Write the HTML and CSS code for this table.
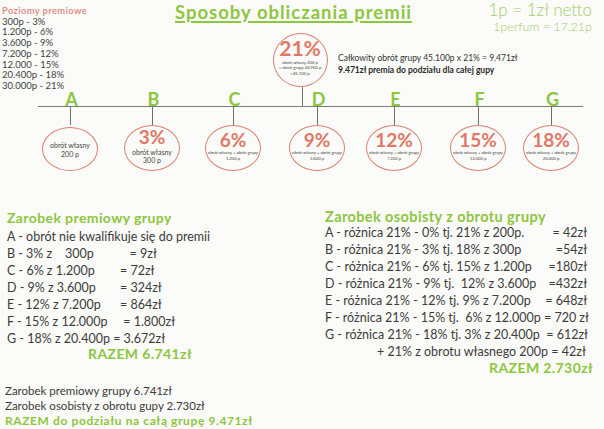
FILE: index.html
```html
<!DOCTYPE html>
<html lang="pl">
<head>
<meta charset="utf-8">
<title>Sposoby obliczania premii</title>
<link rel="stylesheet" href="styles.css">
</head>
<body>
<div class="page">
  <section class="top">
    <header class="header">
      <div class="levels">
        <div class="levels-title">Poziomy premiowe</div>
        <div>300p - 3%</div>
        <div>1.200p - 6%</div>
        <div>3.600p - 9%</div>
        <div>7.200p - 12%</div>
        <div>12.000 - 15%</div>
        <div>20.400p - 18%</div>
        <div>30.000p - 21%</div>
      </div>
      <h1 class="title">Sposoby obliczania premii</h1>
      <div class="rates">
        <div class="rate-main">1p = 1zł netto</div>
        <div class="rate-sub">1perfum = 17,21p</div>
      </div>
    </header>

    <div class="peak">
      <div class="circle circle-peak">
        <span class="pct pct-lg">21%</span>
        <span class="tiny">obrót własny 200 p<br>+ obrót grupy 44.900 p<br>=45.100 p</span>
      </div>
      <div class="stem stem-peak"></div>
    </div>
    <div class="total">
      <p>Całkowity obrót grupy 45.100p x 21% = 9.471zł</p>
      <p class="total-bold">9.471zł premia do podziału dla całej gupy</p>
    </div>

    <div class="timeline"></div>

    <div class="node node-a">
      <span class="letter">A</span>
      <span class="stem"></span>
      <div class="circle circle-sm">
        <span class="small">obrót własny<br>200 p</span>
      </div>
    </div>
    <div class="node node-b">
      <span class="letter">B</span>
      <span class="stem"></span>
      <div class="circle">
        <span class="pct">3%</span>
        <span class="small small-b">obrót własny<br>300 p</span>
      </div>
    </div>
    <div class="node node-c">
      <span class="letter">C</span>
      <span class="stem"></span>
      <div class="circle">
        <span class="pct">6%</span>
        <span class="tiny">obrót własny + obrót grupy<br>1.200 p</span>
      </div>
    </div>
    <div class="node node-d">
      <span class="letter">D</span>
      <span class="stem"></span>
      <div class="circle">
        <span class="pct">9%</span>
        <span class="tiny">obrót własny + obrót grupy<br>3.600 p</span>
      </div>
    </div>
    <div class="node node-e">
      <span class="letter">E</span>
      <span class="stem"></span>
      <div class="circle">
        <span class="pct">12%</span>
        <span class="tiny">obrót własny + obrót grupy<br>7.200 p</span>
      </div>
    </div>
    <div class="node node-f">
      <span class="letter">F</span>
      <span class="stem"></span>
      <div class="circle">
        <span class="pct">15%</span>
        <span class="tiny">obrót własny + obrót grupy<br>12.000 p</span>
      </div>
    </div>
    <div class="node node-g">
      <span class="letter">G</span>
      <span class="stem"></span>
      <div class="circle">
        <span class="pct">18%</span>
        <span class="tiny">obrót własny + obrót grupy<br>20.400 p</span>
      </div>
    </div>
  </section>

  <section class="earnings">
    <div class="col col-left">
      <h2 class="heading">Zarobek premiowy grupy</h2>
      <div class="row">A - obrót nie kwalifikuje się do premii</div>
      <div class="row"><span class="lhs">B - 3% z    300p</span><span class="rhs">   = 9zł</span></div>
      <div class="row"><span class="lhs">C - 6% z 1.200p</span><span class="rhs">= 72zł</span></div>
      <div class="row"><span class="lhs">D - 9% z 3.600p</span><span class="rhs">= 324zł</span></div>
      <div class="row"><span class="lhs">E - 12% z 7.200p</span><span class="rhs">= 864zł</span></div>
      <div class="row"><span class="lhs">F - 15% z 12.000p</span><span class="rhs"> = 1.800zł</span></div>
      <div class="row">G - 18% z 20.400p = 3.672zł</div>
      <div class="sum sum-left">RAZEM 6.741zł</div>
    </div>
    <div class="col col-right">
      <h2 class="heading heading-right">Zarobek osobisty z obrotu grupy</h2>
      <div class="row row-r"><span>A - różnica 21% - 0% tj. 21% z 200p.</span><span class="rhs-r">= 42zł</span></div>
      <div class="row row-r"><span>B - różnica 21% - 3% tj. 18% z 300p</span><span class="rhs-r">=54zł</span></div>
      <div class="row row-r"><span>C - różnica 21% - 6% tj. 15% z 1.200p</span><span class="rhs-r">=180zł</span></div>
      <div class="row row-r"><span>D - różnica 21% - 9% tj.  12% z 3.600p</span><span class="rhs-r">=432zł</span></div>
      <div class="row row-r"><span>E - różnica 21% - 12% tj. 9% z 7.200p</span><span class="rhs-r">= 648zł</span></div>
      <div class="row row-r"><span>F - różnica 21% - 15% tj.  6% z 12.000p</span><span class="rhs-r"> = 720 zł</span></div>
      <div class="row row-r"><span>G - różnica 21% - 18% tj. 3% z 20.400p</span><span class="rhs-r">  = 612zł</span></div>
      <div class="row row-own">+ 21% z obrotu własnego 200p = 42zł</div>
      <div class="sum sum-right">RAZEM 2.730zł</div>
    </div>
  </section>

  <section class="summary">
    <p>Zarobek premiowy grupy 6.741zł</p>
    <p>Zarobek osobisty z obrotu gupy 2.730zł</p>
    <p class="summary-total">RAZEM do podziału na całą grupę 9.471zł</p>
  </section>
</div>
</body>
</html>
```

FILE: styles.css
```css
* {
  box-sizing: border-box;
}

html, body {
  margin: 0;
  padding: 0;
}

body {
  width: 604px;
  height: 429px;
  overflow: hidden;
  background: #fbfbf9;
  font-family: "Lato", "Open Sans", sans-serif;
  color: #3b3b3b;
}

p, h1, h2 {
  margin: 0;
  font-weight: inherit;
}

.page {
  display: flex;
  flex-direction: column;
  width: 604px;
  height: 429px;
}

/* ---------- top diagram area ---------- */
.top {
  position: relative;
  height: 209px;
  flex: none;
}

.header {
  display: flex;
  align-items: flex-start;
}

.levels {
  width: 172px;
  padding: 5px 0 0 2px;
  font-size: 9.5px;
  line-height: 10.8px;
  color: #3f3f3f;
}

.levels-title {
  font-weight: 700;
  font-size: 9.3px;
  letter-spacing: 0.4px;
  color: #de8f8a;
  line-height: 11px;
  margin-bottom: 0.5px;
}

.title {
  margin: 2px 0 0 3px;
  font-size: 18.5px;
  line-height: 21px;
  font-weight: 700;
  color: #8dc63f;
  letter-spacing: 1px;
  text-decoration: underline;
  text-decoration-thickness: 1.5px;
  text-underline-offset: 2px;
}

.rates {
  margin-left: auto;
  padding: 0 12px 0 0;
  color: #a3cf6b;
  font-weight: 300;
  text-align: right;
}

.rate-main {
  font-size: 17px;
  line-height: 20px;
}

.rate-sub {
  font-size: 12.5px;
  line-height: 14px;
}

/* circles */
.circle {
  width: 56px;
  height: 46px;
  border: 1.5px solid #d9806f;
  border-radius: 50%;
  display: flex;
  flex-direction: column;
  align-items: center;
  justify-content: center;
  text-align: center;
  white-space: nowrap;
  flex: none;
}

.circle-sm {
  height: 44px;
  margin-top: 2px;
}

.pct {
  font-size: 19px;
  line-height: 16px;
  font-weight: 700;
  color: #e17866;
  margin-top: -3px;
}

.pct-lg {
  font-size: 21px;
  line-height: 20px;
  margin-top: -6px;
}

.small {
  font-size: 7px;
  line-height: 9px;
  color: #444;
  margin-top: 1px;
}

.small-b {
  margin-top: 3px;
  line-height: 8.5px;
}

.tiny {
  font-size: 4.2px;
  line-height: 5.6px;
  color: #444;
  margin-top: 2px;
}

.stem {
  display: block;
  width: 1px;
  height: 19px;
  background: #6f6f6f;
  flex: none;
}

/* 21% peak node */
.peak {
  position: absolute;
  left: 272px;
  top: 33px;
  display: flex;
  flex-direction: column;
  align-items: center;
  width: 56px;
}

.circle-peak {
  width: 55px;
  height: 54px;
}

.stem-peak {
  margin-left: 5px;
  height: 20px;
}

.total {
  position: absolute;
  left: 338px;
  top: 52px;
  font-size: 8.5px;
  line-height: 12px;
  color: #333;
}

.total-bold {
  font-weight: 700;
  color: #2a2a2a;
}

.timeline {
  position: absolute;
  left: 38px;
  top: 105.5px;
  width: 545px;
  height: 1.5px;
  background: #7b7b7b;
}

.node {
  position: absolute;
  top: 91px;
  width: 56px;
  display: flex;
  flex-direction: column;
  align-items: center;
}

.letter {
  display: block;
  height: 15px;
  font-size: 18px;
  line-height: 17px;
  font-weight: 700;
  color: #8dc63f;
  padding-left: 3px;
}

.node-a { left: 42px; }
.node-b { left: 124px; }
.node-c { left: 205px; }
.node-d { left: 289px; }
.node-e { left: 366px; }
.node-f { left: 450px; }
.node-g { left: 523px; }

/* ---------- earnings ---------- */
.earnings {
  display: flex;
  flex: none;
}

.col-left {
  width: 318px;
  padding-left: 7px;
}

.col-right {
  width: 275px;
  padding-left: 7px;
}

.heading {
  font-size: 14px;
  letter-spacing: 0.4px;
  line-height: 17px;
  font-weight: 700;
  color: #8dc63f;
  margin-bottom: 1.5px;
  white-space: nowrap;
}

.heading-right {
  font-size: 14.5px;
  margin-top: 1px;
  line-height: 14px;
  margin-bottom: 0;
}

.row {
  font-size: 12.5px;
  line-height: 17px;
  white-space: pre;
  display: flex;
}

.lhs {
  min-width: 113px;
}

.row-r {
  width: 262px;
}

.rhs-r {
  margin-left: auto;
}

.row-own {
  padding-left: 52px;
}

.sum {
  font-size: 14px;
  letter-spacing: 0.4px;
  font-weight: 700;
  color: #8dc63f;
  line-height: 14px;
}

.sum-left {
  padding-left: 81px;
}

.sum-right {
  text-align: right;
  margin-top: 1px;
}

/* ---------- summary ---------- */
.summary {
  margin-top: 8px;
  padding-left: 5px;
  font-size: 11.5px;
  line-height: 15px;
  color: #3a3a3a;
}

.summary-total {
  font-size: 12px;
  letter-spacing: 0.6px;
  font-weight: 700;
  color: #8dc63f;
}
```
